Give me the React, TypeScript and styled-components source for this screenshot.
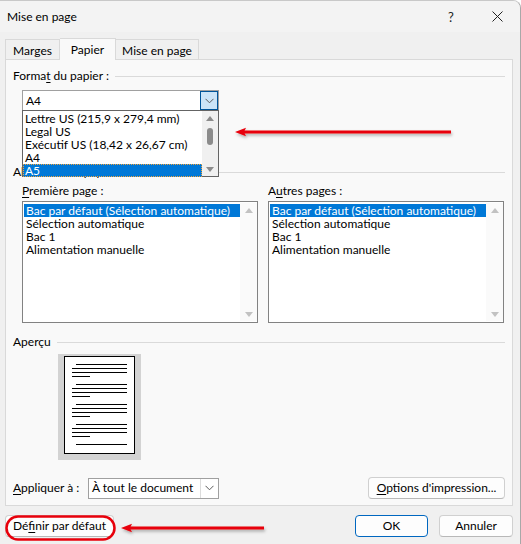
import React from "react";
import styled, { createGlobalStyle, css } from "styled-components";

const Global = createGlobalStyle`
  html, body { margin: 0; padding: 0; background: #ffffff; }
  * { box-sizing: border-box; }
  body { font-family: Lato, "Noto Sans", sans-serif; font-size: 12px; line-height: 16px; color: #000; }
`;

const Win = styled.div`
  position: relative;
  width: 521px;
  height: 544px;
  background: #f0f0f0;
  border-right: 1px solid #a8a8a8;
  border-top: 1px solid #c8c8c8;
  border-top-right-radius: 8px;
  display: flex;
  flex-direction: column;
  overflow: hidden;
`;

const TitleBar = styled.div`
  height: 31px;
  display: flex;
  align-items: center;
  padding-left: 7px;
  background: #f3f3f3;
`;

const Title = styled.div`
  flex: 1;
  font-size: 12px;
`;

const TitleBtn = styled.div<{ $w: number }>`
  width: ${(p) => p.$w}px;
  height: 31px;
  display: flex;
  align-items: center;
  justify-content: center;
  font-size: 13px;
  color: #222;
`;

const Body = styled.div`
  flex: 1;
  display: flex;
  flex-direction: column;
  padding: 5px 7px 0 5px;
`;

const Tabs = styled.div`
  display: flex;
  align-items: flex-end;
  height: 22px;
  position: relative;
  z-index: 1;
`;

const Tab = styled.div<{ $active?: boolean; $w: number }>`
  width: ${(p) => p.$w}px;
  height: ${(p) => (p.$active ? 22 : 20)}px;
  border: 1px solid #d9d9d9;
  border-bottom: none;
  background: ${(p) => (p.$active ? "#f9f9f9" : "#f0f0f0")};
  display: flex;
  align-items: center;
  justify-content: center;
  padding-top: ${(p) => (p.$active ? 0 : 2)}px;
  margin-bottom: ${(p) => (p.$active ? -1 : 0)}px;
  ${(p) => !p.$active && css`& + & { border-left: none; }`}
`;

const Panel = styled.div`
  height: 447px;
  border: 1px solid #d9d9d9;
  background: #f9f9f9;
  padding: 8px 7px 0 7px;
  display: flex;
  flex-direction: column;
  position: relative;
`;

const GroupHead = styled.div<{ $mt?: number }>`
  display: flex;
  align-items: center;
  gap: 6px;
  height: 16px;
  margin-top: ${(p) => p.$mt ?? 0}px;
  color: #000;
  &::after {
    content: "";
    flex: 1;
    height: 1px;
    background: #dadada;
  }
`;

const U = styled.span`
  text-decoration: underline;
  text-underline-offset: 2px;
`;

const ComboWrap = styled.div`
  position: relative;
  margin: 6px 0 0 9px;
  width: 197px;
`;

const Combo = styled.div<{ $w: number }>`
  width: ${(p) => p.$w}px;
  height: 21px;
  border: 1px solid #a0a0a0;
  background: #fff;
  display: flex;
  align-items: center;
  padding-left: 3px;
`;

const ComboText = styled.div`
  flex: 1;
  white-space: nowrap;
`;

const DropBtn = styled.div<{ $hot?: boolean }>`
  width: 18px;
  height: 19px;
  display: flex;
  align-items: center;
  justify-content: center;
  ${(p) =>
    p.$hot
      ? css`
          background: #cce4f7;
          border: 1px solid #005499;
        `
      : css`
          border-left: 1px solid #dcdcdc;
        `}
`;

const DropList = styled.div`
  position: absolute;
  left: 0;
  top: 20px;
  width: 197px;
  height: 67px;
  background: #fff;
  border: 1px solid #646464;
  display: flex;
  z-index: 5;
`;

const Items = styled.div`
  flex: 1;
  padding-top: 1px;
`;

const Item = styled.div<{ $sel?: boolean; $focus?: boolean }>`
  height: 13px;
  line-height: 13px;
  padding-left: 2px;
  white-space: nowrap;
  ${(p) =>
    p.$sel &&
    css`
      background: #0078d7;
      color: #fff;
    `}
  ${(p) =>
    p.$focus &&
    css`
      outline: 1px dotted #f2a33a;
      outline-offset: -1px;
    `}
`;

const VScroll = styled.div<{ $w: number; $bg: string }>`
  width: ${(p) => p.$w}px;
  background: ${(p) => p.$bg};
  display: flex;
  flex-direction: column;
  align-items: center;
  justify-content: space-between;
  padding: 5px 0 4px;
`;

const Thumb = styled.div`
  width: 6px;
  height: 17px;
  border-radius: 3px;
  background: #8b8b8b;
  margin-top: -16px;
`;

const Spacer = styled.div`
  flex: 1;
`;

const Columns = styled.div`
  display: grid;
  grid-template-columns: 236px 236px;
  column-gap: 10px;
  margin: 3px 0 0 9px;
`;

const Col = styled.div`
  display: flex;
  flex-direction: column;
  gap: 2px;
`;

const ListBox = styled.div`
  height: 122px;
  border: 1px solid #828282;
  background: #fff;
  display: flex;
  padding: 1px 0 1px 1px;
`;

const PreviewBox = styled.div`
  margin: 4px 0 0 45px;
  width: 83px;
  height: 106px;
  background: #d3d3d3;
  padding: 2px 0 0 6px;
`;

const Page = styled.div`
  width: 71px;
  height: 98px;
  background: #fff;
  border: 1.5px solid #000;
  padding: 7px 0 0 7px;
  display: flex;
  flex-direction: column;
`;

const Line = styled.div<{ $indent?: boolean; $short?: boolean; $gap?: number }>`
  height: 1px;
  background: #000;
  margin-left: ${(p) => (p.$indent ? 4 : 0)}px;
  width: ${(p) => (p.$short ? 18 : p.$indent ? 51 : 55)}px;
  margin-top: ${(p) => p.$gap ?? 3}px;
`;

const ApplyRow = styled.div`
  display: flex;
  align-items: center;
  margin-top: 17px;
`;

const ApplyLabel = styled.div`
  width: 75px;
`;

const Button = styled.div<{ $w: number; $default?: boolean }>`
  width: ${(p) => p.$w}px;
  height: 22px;
  border: 1px solid ${(p) => (p.$default ? "#0067c0" : "#d0d0d0")};
  border-bottom-color: ${(p) => (p.$default ? "#0067c0" : "#b8b8b8")};
  border-radius: 4px;
  background: #fdfdfd;
  display: flex;
  align-items: center;
  justify-content: center;
`;

const Footer = styled.div`
  display: flex;
  align-items: center;
  gap: 11px;
  margin-top: 9px;
  position: relative;
`;

const Overlay = styled.svg<{ $l: number; $t: number }>`
  position: absolute;
  left: ${(p) => p.$l}px;
  top: ${(p) => p.$t}px;
  overflow: visible;
  pointer-events: none;
  z-index: 10;
`;

const Chevron = () => (
  <svg width="9" height="6" viewBox="0 0 9 6">
    <path d="M0.5 0.8 L4.5 4.8 L8.5 0.8" fill="none" stroke="#5a5a5a" strokeWidth="1" />
  </svg>
);

const UpTri = ({ c = "#8b8b8b" }: { c?: string }) => (
  <svg width="8" height="5" viewBox="0 0 8 5">
    <path d="M0 5 L4 0 L8 5 Z" fill={c} />
  </svg>
);

const DownTri = ({ c = "#8b8b8b" }: { c?: string }) => (
  <svg width="8" height="5" viewBox="0 0 8 5">
    <path d="M0 0 L8 0 L4 5 Z" fill={c} />
  </svg>
);

const Arrow = ({ len, l, t }: { len: number; l: number; t: number }) => (
  <Overlay $l={l} $t={t} width={len} height="10" viewBox={`0 0 ${len} 10`}>
    <defs>
      <filter id={`sh${l}`} x="-10%" y="-100%" width="120%" height="300%">
        <feDropShadow dx="1" dy="2" stdDeviation="1.5" floodColor="#000" floodOpacity="0.3" />
      </filter>
    </defs>
    <g filter={`url(#sh${l})`}>
      <rect x="8" y="3.5" width={len - 8} height="3" fill="#e8000b" />
      <path d="M0 5 L11 0.8 L9 5 L11 9.2 Z" fill="#e8000b" />
    </g>
  </Overlay>
);

const trays = [
  "Bac par défaut (Sélection automatique)",
  "Sélection automatique",
  "Bac 1",
  "Alimentation manuelle",
];

const TrayList = () => (
  <ListBox>
    <Items>
      {trays.map((t, i) => (
        <Item key={t} $sel={i === 0}>
          {t}
        </Item>
      ))}
    </Items>
    <VScroll $w={17} $bg="#fafafa">
      <UpTri c="#c2c2c2" />
      <DownTri c="#c2c2c2" />
    </VScroll>
  </ListBox>
);

const PageLines = () => {
  const groups = [0, 1, 2, 3];
  return (
    <Page>
      {groups.map((g) => (
        <React.Fragment key={g}>
          <Line $indent $gap={g === 0 ? 0 : 7} />
          <Line />
          <Line />
          <Line $short />
        </React.Fragment>
      ))}
      <Line $indent $gap={7} />
    </Page>
  );
};

export default function App() {
  return (
    <>
      <Global />
      <Win>
        <TitleBar>
          <Title>Mise en page</Title>
          <TitleBtn $w={46}>?</TitleBtn>
          <TitleBtn $w={46}>
            <svg width="11" height="11" viewBox="0 0 11 11">
              <path d="M0.5 0.5 L10.5 10.5 M10.5 0.5 L0.5 10.5" stroke="#222" strokeWidth="1" />
            </svg>
          </TitleBtn>
        </TitleBar>
        <Body>
          <Tabs>
            <Tab $w={55}>Marges</Tab>
            <Tab $w={56} $active>
              Papier
            </Tab>
            <Tab $w={83}>Mise en page</Tab>
          </Tabs>
          <Panel>
            <GroupHead>
              <span>
                Forma<U>t</U> du papier :
              </span>
            </GroupHead>
            <ComboWrap>
              <Combo $w={197}>
                <ComboText>A4</ComboText>
                <DropBtn $hot>
                  <Chevron />
                </DropBtn>
              </Combo>
              <DropList>
                <Items>
                  <Item>Lettre US (215,9 x 279,4 mm)</Item>
                  <Item>Legal US</Item>
                  <Item>Exécutif US (18,42 x 26,67 cm)</Item>
                  <Item>A4</Item>
                  <Item $sel $focus>
                    A5
                  </Item>
                </Items>
                <VScroll $w={16} $bg="#f0f0f0">
                  <UpTri />
                  <Thumb />
                  <DownTri />
                </VScroll>
              </DropList>
            </ComboWrap>
            <GroupHead $mt={53}>
              <span>Alimentation papier</span>
            </GroupHead>
            <Columns>
              <Col>
                <div>
                  <U>P</U>remière page :
                </div>
                <TrayList />
              </Col>
              <Col>
                <div>
                  A<U>u</U>tres pages :
                </div>
                <TrayList />
              </Col>
            </Columns>
            <GroupHead $mt={11}>
              <span>Aperçu</span>
            </GroupHead>
            <PreviewBox>
              <PageLines />
            </PreviewBox>
            <ApplyRow>
              <ApplyLabel>
                <U>A</U>ppliquer à :
              </ApplyLabel>
              <Combo $w={131}>
                <ComboText>À tout le document</ComboText>
                <DropBtn>
                  <Chevron />
                </DropBtn>
              </Combo>
              <Spacer />
              <Button $w={137}>
                <span>
                  <U>O</U>ptions d'impression...
                </span>
              </Button>
            </ApplyRow>
          </Panel>
          <Footer>
            <Button $w={109}>
              <span>
                Dé<U>f</U>inir par défaut
              </span>
            </Button>
            <Spacer />
            <Button $w={73} $default>
              OK
            </Button>
            <Button $w={74}>Annuler</Button>
          </Footer>
        </Body>
        <Arrow len={216} l={235} t={126} />
        <Arrow len={143} l={121} t={522} />
        <Overlay $l={5} $t={514} width="112" height="27" viewBox="0 0 112 27">
          <rect x="1.5" y="1.5" width="108" height="23" rx="11.5" fill="none" stroke="#e8000b" strokeWidth="2.5" />
        </Overlay>
      </Win>
    </>
  );
}
